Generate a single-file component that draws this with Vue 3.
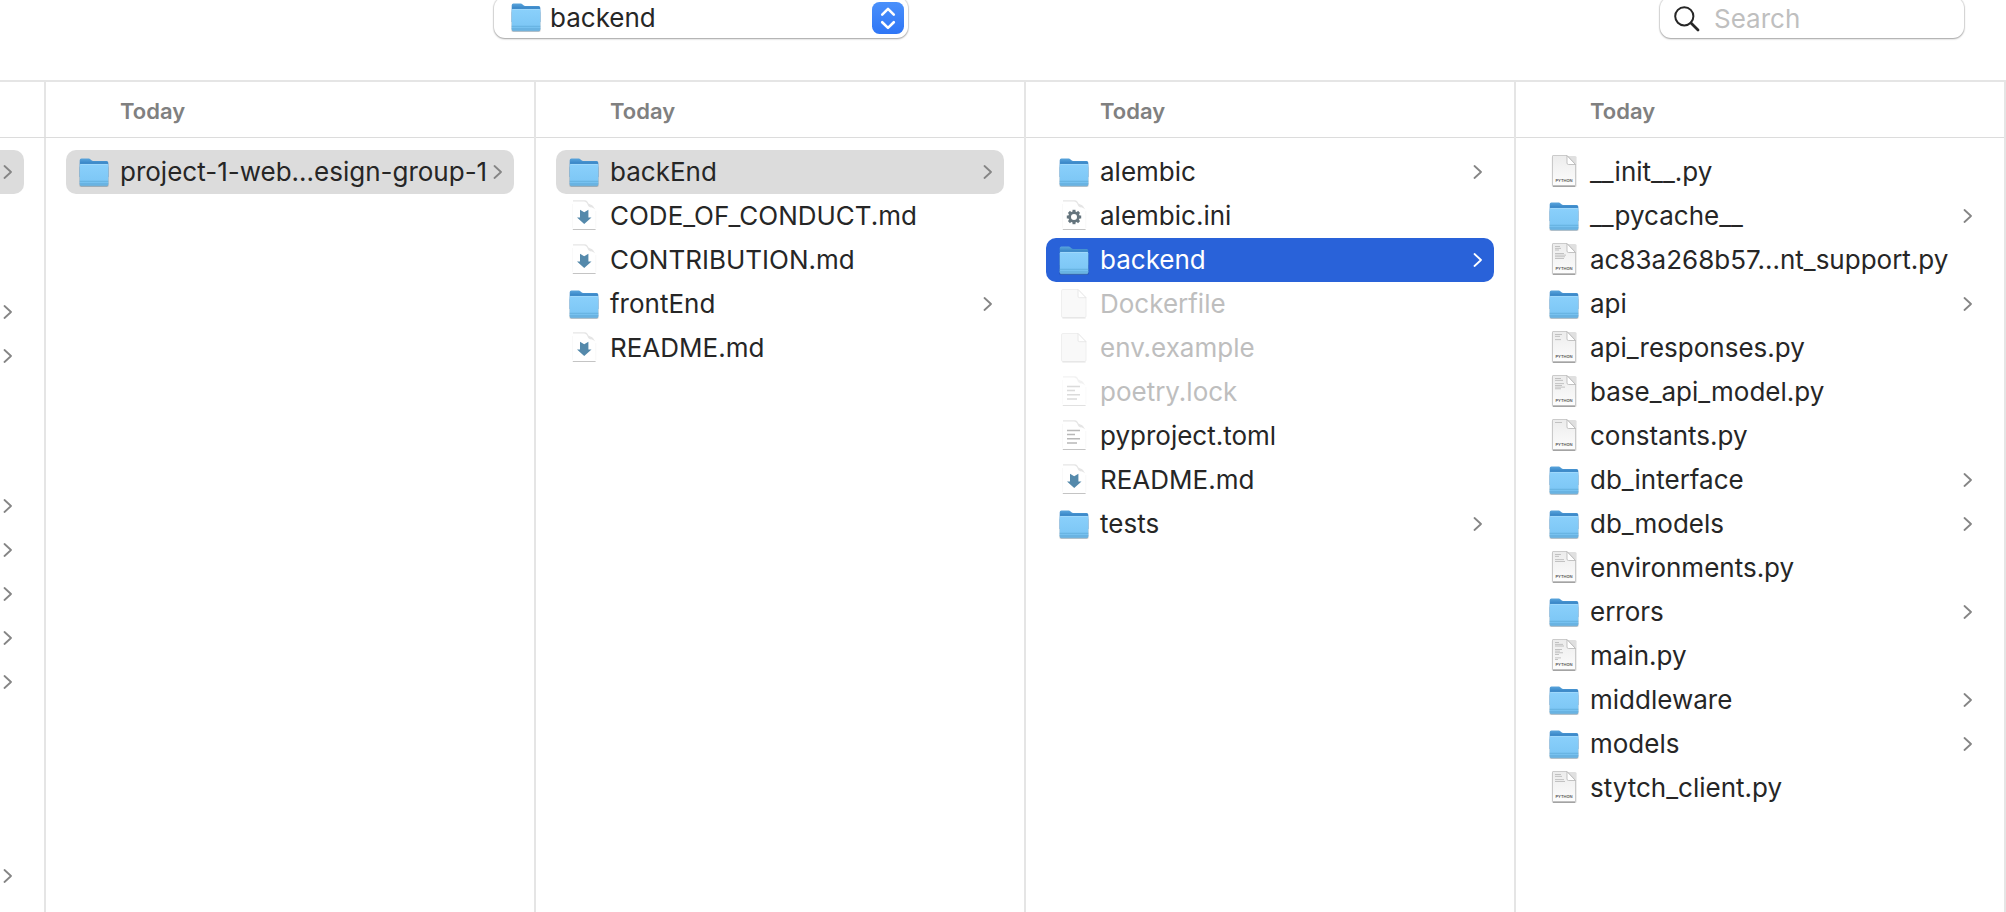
<script setup>
import { ref } from 'vue'

const location = ref('backend')
const query = ref('')

const ancestorGroups = [
  { key: 'a', rows: [{ selected: true }] },
  { key: 'b', rows: [{}, {}] },
  { key: 'c', rows: [{}, {}, {}, {}, {}] },
  { key: 'd', rows: [{}] },
]

const columns = [
  {
    title: 'Today',
    items: [{ name: 'project-1-web…esign-group-1', kind: 'folder', state: 'open' }],
  },
  {
    title: 'Today',
    items: [
      { name: 'backEnd', kind: 'folder', state: 'open' },
      { name: 'CODE_OF_CONDUCT.md', kind: 'md' },
      { name: 'CONTRIBUTION.md', kind: 'md' },
      { name: 'frontEnd', kind: 'folder' },
      { name: 'README.md', kind: 'md' },
    ],
  },
  {
    title: 'Today',
    items: [
      { name: 'alembic', kind: 'folder' },
      { name: 'alembic.ini', kind: 'gear' },
      { name: 'backend', kind: 'folder', state: 'active' },
      { name: 'Dockerfile', kind: 'blank', state: 'dim' },
      { name: 'env.example', kind: 'blank', state: 'dim' },
      { name: 'poetry.lock', kind: 'text', state: 'dim' },
      { name: 'pyproject.toml', kind: 'text' },
      { name: 'README.md', kind: 'md' },
      { name: 'tests', kind: 'folder' },
    ],
  },
  {
    title: 'Today',
    items: [
      { name: '__init__.py', kind: 'py', lines: [] },
      { name: '__pycache__', kind: 'folder' },
      { name: 'ac83a268b57…nt_support.py', kind: 'py', lines: [5, 6, 4, 0, 9, 11, 10, 9] },
      { name: 'api', kind: 'folder' },
      { name: 'api_responses.py', kind: 'py', lines: [7, 5, 0, 6] },
      { name: 'base_api_model.py', kind: 'py', lines: [6, 8, 0, 9, 7, 10, 6] },
      { name: 'constants.py', kind: 'py', lines: [7] },
      { name: 'db_interface', kind: 'folder' },
      { name: 'db_models', kind: 'folder' },
      { name: 'environments.py', kind: 'py', lines: [6, 4, 0, 9, 10] },
      { name: 'errors', kind: 'folder' },
      { name: 'main.py', kind: 'py', lines: [4, 8, 9, 0, 7, 5, 8, 4, 0, 6, 3] },
      { name: 'middleware', kind: 'folder' },
      { name: 'models', kind: 'folder' },
      { name: 'stytch_client.py', kind: 'py', lines: [6, 7, 0, 9, 10] },
    ],
  },
]

const teeth = [0, 45, 90, 135, 180, 225, 270, 315]

const iconView = (kind) => (kind === 'folder' ? '0 -1 32 32' : '0 1 32 32')
</script>

<template>
  <div class="window">
    <svg class="defs" aria-hidden="true">
      <defs>
        <linearGradient id="folder-back" x1="0" y1="0" x2="0" y2="1">
          <stop offset="0" stop-color="#5aa5dc" />
          <stop offset="0.3" stop-color="#3381c4" />
        </linearGradient>
        <linearGradient id="folder-front" x1="0" y1="0" x2="0" y2="1">
          <stop offset="0" stop-color="#8ad0fb" />
          <stop offset="1" stop-color="#7ac5f4" />
        </linearGradient>
        <linearGradient id="paper" x1="0" y1="0" x2="0" y2="1">
          <stop offset="0" stop-color="#ececec" />
          <stop offset="1" stop-color="#fdfdfd" />
        </linearGradient>
        <symbol id="icon-folder" viewBox="0 0 32 32">
          <rect x="1" y="9" width="30" height="21" rx="2" fill="#000" opacity="0.12" />
          <rect x="2" y="10" width="28" height="19.500" rx="1.500" fill="#5a86a5" opacity="0.7" />
          <path d="M1.700 3.200q0-1.700 1.700-1.700h7.600c1.500 0 2.200 2.500 4 2.500h13.600q1.700 0 1.700 1.700V20H1.700z" fill="url(#folder-back)" />
          <path d="M1.700 8.500q0-1.500 1.500-1.500h25.600q1.500 0 1.500 1.500v18.500q0 1.500-1.500 1.500H3.200q-1.500 0-1.500-1.500z" fill="url(#folder-front)" />
          <path d="M2 7.400h28" stroke="#a6dcfc" stroke-width="0.800" />
          <path d="M1.700 24.300h28.600" stroke="#5fa9d9" stroke-width="0.800" />
          <path d="M1.700 25.800h28.600v1.200q0 1.500-1.500 1.500H3.200q-1.500 0-1.500-1.500z" fill="#69b3e2" />
        </symbol>
        <symbol id="icon-sheet" viewBox="0 0 32 32">
          <path d="M5 1.200h11.500c2.500 0 3 1.500 4 3.300.7 1 3 1 4.500 2.500l2.300 3.500c-3.500-3-5.500-1.500-7-3.500-1.200-2-1-4-4.300-4.500H5z" fill="#dcdcdc" opacity="0.75" />
          <path d="M4.500 5v24M27.800 12v17" stroke="#f6f6f6" stroke-width="0.700" />
          <path d="M4.800 30.500h22.800" stroke="#c4c4c4" stroke-width="1" />
        </symbol>
        <symbol id="icon-blank" viewBox="0 0 32 32">
          <path d="M3.500 4q0-1.500 1.500-1.500h15l8 8.200V29q0 1.500-1.500 1.500H5q-1.500 0-1.500-1.500z" fill="#f4f4f4" stroke="#dedede" stroke-width="0.900" />
          <path d="M20 2.500v6.700q0 1.500 1.500 1.500H28z" fill="#fff" stroke="#cfcfcf" stroke-width="0.900" />
          <path d="M4.500 31h23" stroke="#b5b5b5" stroke-width="0.700" />
        </symbol>
      </defs>
    </svg>

    <header class="toolbar">
      <div class="location">
        <svg class="icon" viewBox="0 0 32 32" aria-hidden="true"><use href="#icon-folder" /></svg>
        <select v-model="location" class="location-select" aria-label="Current folder">
          <option value="backend">backend</option>
        </select>
        <svg class="stepper" viewBox="0 0 32 32" aria-hidden="true">
          <defs>
            <linearGradient id="stepper-fill" x1="0" y1="0" x2="0" y2="1">
              <stop offset="0" stop-color="#4a90fb" />
              <stop offset="1" stop-color="#2f76f6" />
            </linearGradient>
          </defs>
          <rect width="32" height="32" rx="7.500" fill="url(#stepper-fill)" />
          <path d="M10.200 12.600 16 6.900l5.800 5.700M10.200 20.200 16 25.900l5.800-5.700" />
        </svg>
      </div>
      <label class="search">
        <svg class="magnifier" viewBox="0 0 26 26" aria-hidden="true">
          <circle cx="10.300" cy="10.300" r="9.100" />
          <path d="M17 17l7 7" />
        </svg>
        <input v-model="query" class="search-input" type="text" placeholder="Search" aria-label="Search" />
      </label>
    </header>

    <main class="browser">
      <section class="column ancestor" aria-label="Parent folders">
        <div class="column-header"></div>
        <div class="groups">
          <ul v-for="group in ancestorGroups" :key="group.key" class="list" :class="'group-' + group.key">
            <li v-for="(row, i) in group.rows" :key="i">
              <button type="button" class="row" :class="{ open: row.selected }" aria-label="Folder">
                <svg class="chevron" viewBox="0 0 10 16" aria-hidden="true"><path d="M2.500 2l6.500 6-6.500 6" /></svg>
              </button>
            </li>
          </ul>
        </div>
      </section>

      <section v-for="(column, c) in columns" :key="c" class="column">
        <h2 class="column-header">{{ column.title }}</h2>
        <ul class="list">
          <li v-for="item in column.items" :key="item.name">
            <button type="button" class="row" :class="item.state">
              <svg class="icon" :viewBox="iconView(item.kind)" aria-hidden="true">
                <use v-if="item.kind === 'folder'" href="#icon-folder" width="32" height="32" />
                <use v-else-if="item.kind === 'blank'" href="#icon-blank" width="32" height="32" />
                <template v-else-if="item.kind === 'md'">
                  <use href="#icon-sheet" width="32" height="32" />
                  <path d="M12 10.800l4.200 2.400 4.200-2.400v7.700h3.100L16.200 25 9 18.500h3z" fill="#5489ab" />
                </template>
                <template v-else-if="item.kind === 'gear'">
                  <use href="#icon-sheet" width="32" height="32" />
                  <circle cx="16" cy="18" r="4.400" fill="none" stroke="#64747d" stroke-width="2.800" />
                  <rect v-for="a in teeth" :key="a" x="14.500" y="10.800" width="3" height="3" fill="#64747d" :transform="`rotate(${a} 16 18)`" />
                </template>
                <template v-else-if="item.kind === 'text'">
                  <use href="#icon-sheet" width="32" height="32" />
                  <path d="M9 11.500h13M9 15.500h8M9 19.700h13M9 24h10" stroke="#b8b8b8" stroke-width="1.500" />
                </template>
                <template v-else>
                  <rect x="3.800" y="1" width="24.800" height="31" rx="1.500" fill="#000" opacity="0.120" />
                  <path d="M4.500 1q0-.5.500-.5h14l8.500 9V30q0 .8-.8.800H5.300q-.8 0-.8-.8z" fill="url(#paper)" stroke="#c0c0c0" stroke-width="0.800" />
                  <path d="M5 31.200h22.200" stroke="#8c8c8c" stroke-width="1" />
                  <rect v-for="(w, i) in item.lines" :key="i" x="7" :y="3.2 + i * 1.7" :width="w" height="0.800" fill="#a8a8a8" opacity="0.800" />
                  <path d="M19 .7v7.300q0 1.500 1.500 1.500h7z" fill="#fff" stroke="#b4b4b4" stroke-width="0.800" />
                  <text x="16" y="27.200" class="doc-tag">PYTHON</text>
                </template>
              </svg>
              <span class="name">{{ item.name }}</span>
              <svg v-if="item.kind === 'folder'" class="chevron" viewBox="0 0 10 16" aria-hidden="true"><path d="M2.500 2l6.500 6-6.500 6" /></svg>
            </button>
          </li>
        </ul>
      </section>
    </main>
  </div>
</template>

<style>
body {
  background: #fff;
}
</style>

<style scoped>
.window {
  display: flex;
  flex-direction: column;
  min-height: 100vh;
  overflow: hidden;
  background: #fff;
  color: #262626;
  font-family: Inter, "Liberation Sans", sans-serif;
  font-size: 26px;
}

.defs {
  position: absolute;
  width: 0;
  height: 0;
}

.toolbar {
  display: flex;
  justify-content: space-between;
  align-items: flex-start;
  height: 80px;
  padding: 0 42px 0 494px;
}

.location,
.search {
  box-sizing: border-box;
  height: 41px;
  margin-top: -3px;
  background: #fff;
  border-radius: 11px;
  box-shadow: 0 0 1px 1px rgba(0, 0, 0, 0.1), 0 1px 2px rgba(0, 0, 0, 0.3);
}

.location {
  display: grid;
  grid-template-columns: 48px 1fr 36px;
  align-items: center;
  width: 414px;
}

.location .icon {
  grid-area: 1 / 1;
  justify-self: end;
  pointer-events: none;
}

.location-select {
  grid-area: 1 / 1 / 2 / 4;
  width: 100%;
  height: 100%;
  padding: 0 44px 1px 56px;
  border: 0;
  border-radius: 11px;
  background: transparent;
  color: inherit;
  font: inherit;
  appearance: none;
}

.stepper {
  grid-area: 1 / 3;
  width: 32px;
  height: 32px;
  pointer-events: none;
}

.stepper path {
  fill: none;
  stroke: #fff;
  stroke-width: 2.6;
  stroke-linecap: round;
  stroke-linejoin: round;
}

.search {
  display: flex;
  align-items: center;
  gap: 14px;
  width: 304px;
  padding: 2px 14px 0;
}

.magnifier {
  flex: none;
  width: 26px;
  height: 26px;
  fill: none;
  stroke: #262626;
  stroke-width: 2;
  stroke-linecap: round;
}

.magnifier path {
  stroke-width: 2.8;
}

.search-input {
  flex: 1;
  min-width: 0;
  padding: 0;
  border: 0;
  outline: 0;
  background: transparent;
  color: inherit;
  font: inherit;
}

.search-input::placeholder {
  color: #bfbfbf;
  opacity: 1;
}

.browser {
  flex: 1;
  display: grid;
  grid-template-columns: 46px repeat(4, 1fr);
  border-top: 2px solid #e5e5e5;
}

.column {
  min-width: 0;
  border-right: 2px solid #e5e5e5;
}

.column-header {
  box-sizing: border-box;
  height: 56px;
  margin: 0;
  padding-left: 74px;
  border-bottom: 1px solid #dcdcdc;
  color: #808080;
  font-size: 22px;
  font-weight: 600;
  line-height: 58px;
}

.list {
  margin: 0;
  padding: 12px 20px 0;
  list-style: none;
}

.row {
  display: flex;
  align-items: center;
  box-sizing: border-box;
  width: 100%;
  height: 44px;
  padding: 0 12px;
  border: 0;
  border-radius: 10px;
  background: transparent;
  color: inherit;
  font: inherit;
  text-align: left;
}

.row.open {
  background: #dcdcdc;
}

.row.active {
  background: #2962d9;
  color: #fff;
}

.row.dim {
  color: #bebebe;
}

.row.dim .icon {
  opacity: 0.5;
}

.icon {
  flex: none;
  width: 32px;
  height: 32px;
  overflow: visible;
}

.name {
  flex: 1;
  padding: 0 0 2px 10px;
  white-space: nowrap;
}

.chevron {
  flex: none;
  width: 10px;
  height: 16px;
  fill: none;
  stroke: #858585;
  stroke-width: 1.8;
  stroke-linecap: round;
  stroke-linejoin: round;
}

.active .chevron {
  stroke: #fff;
}

.doc-tag {
  fill: #555;
  font-size: 4px;
  font-weight: 600;
  text-anchor: middle;
  text-rendering: geometricPrecision;
}

.ancestor .list {
  padding: 0 20px 0 0;
}

.ancestor .row {
  justify-content: flex-end;
  border-radius: 0 10px 10px 0;
}

.groups {
  display: flex;
  flex-direction: column;
  padding-top: 12px;
}

.ancestor .group-b {
  margin-top: 96px;
}

.ancestor .group-c {
  margin-top: 106px;
}

.ancestor .group-d {
  margin-top: 150px;
}
</style>
